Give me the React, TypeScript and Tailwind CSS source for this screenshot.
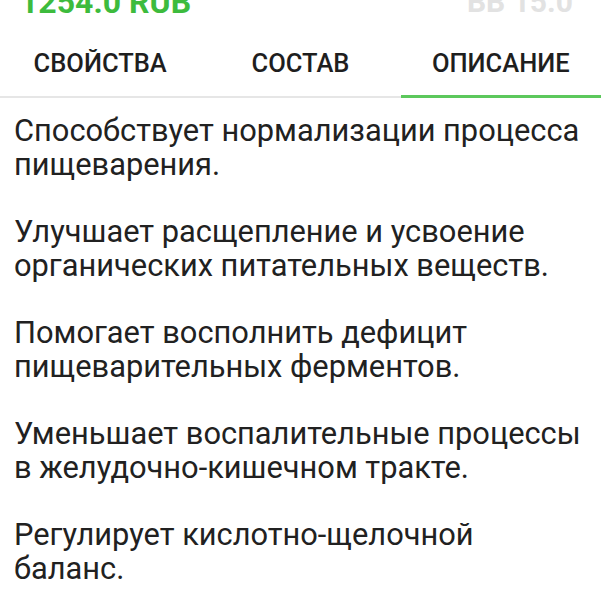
import React from "react";

const paras = [
  "Способствует нормализации процесса пищеварения.",
  "Улучшает расщепление и усвоение органических питательных веществ.",
  "Помогает восполнить дефицит пищеварительных ферментов.",
  "Уменьшает воспалительные процессы в желудочно-кишечном тракте.",
  "Регулирует кислотно-щелочной баланс.",
];

export default function App() {
  return (
    <div className="w-[601px] h-[600px] overflow-hidden bg-white" style={{ fontFamily: "Roboto, 'Noto Sans', sans-serif" }}>
      <div className="h-[14px] overflow-hidden relative">
        <div className="absolute left-[20px] bottom-[-4px] text-[32px] leading-[32px] font-bold text-[#3dbb3d]">1254.0 RUB</div>
        <div className="absolute right-[28px] bottom-[-4px] text-[30px] leading-[32px] font-bold text-[#e2e2e2]">BB 15.0</div>
      </div>
      <div className="flex h-[84px] border-b-2 border-[#e6e6e6]">
        {["СВОЙСТВА", "СОСТАВ", "ОПИСАНИЕ"].map((t, i) => (
          <div key={t} className={`flex-1 flex items-center justify-center text-[25.5px] font-medium text-[#1e1e1e] ${i === 2 ? "border-b-[3px] border-[#5cc85c] -mb-[2px]" : ""}`}>
            <span className="pt-[17px]">{t}</span>
          </div>
        ))}
      </div>
      <div className="px-[14px] pt-[16px] flex flex-col gap-[33px]">
        {paras.map((p) => (
          <p key={p} className="text-[30.8px] leading-[34px] text-[#212121]">{p}</p>
        ))}
      </div>
    </div>
  );
}
